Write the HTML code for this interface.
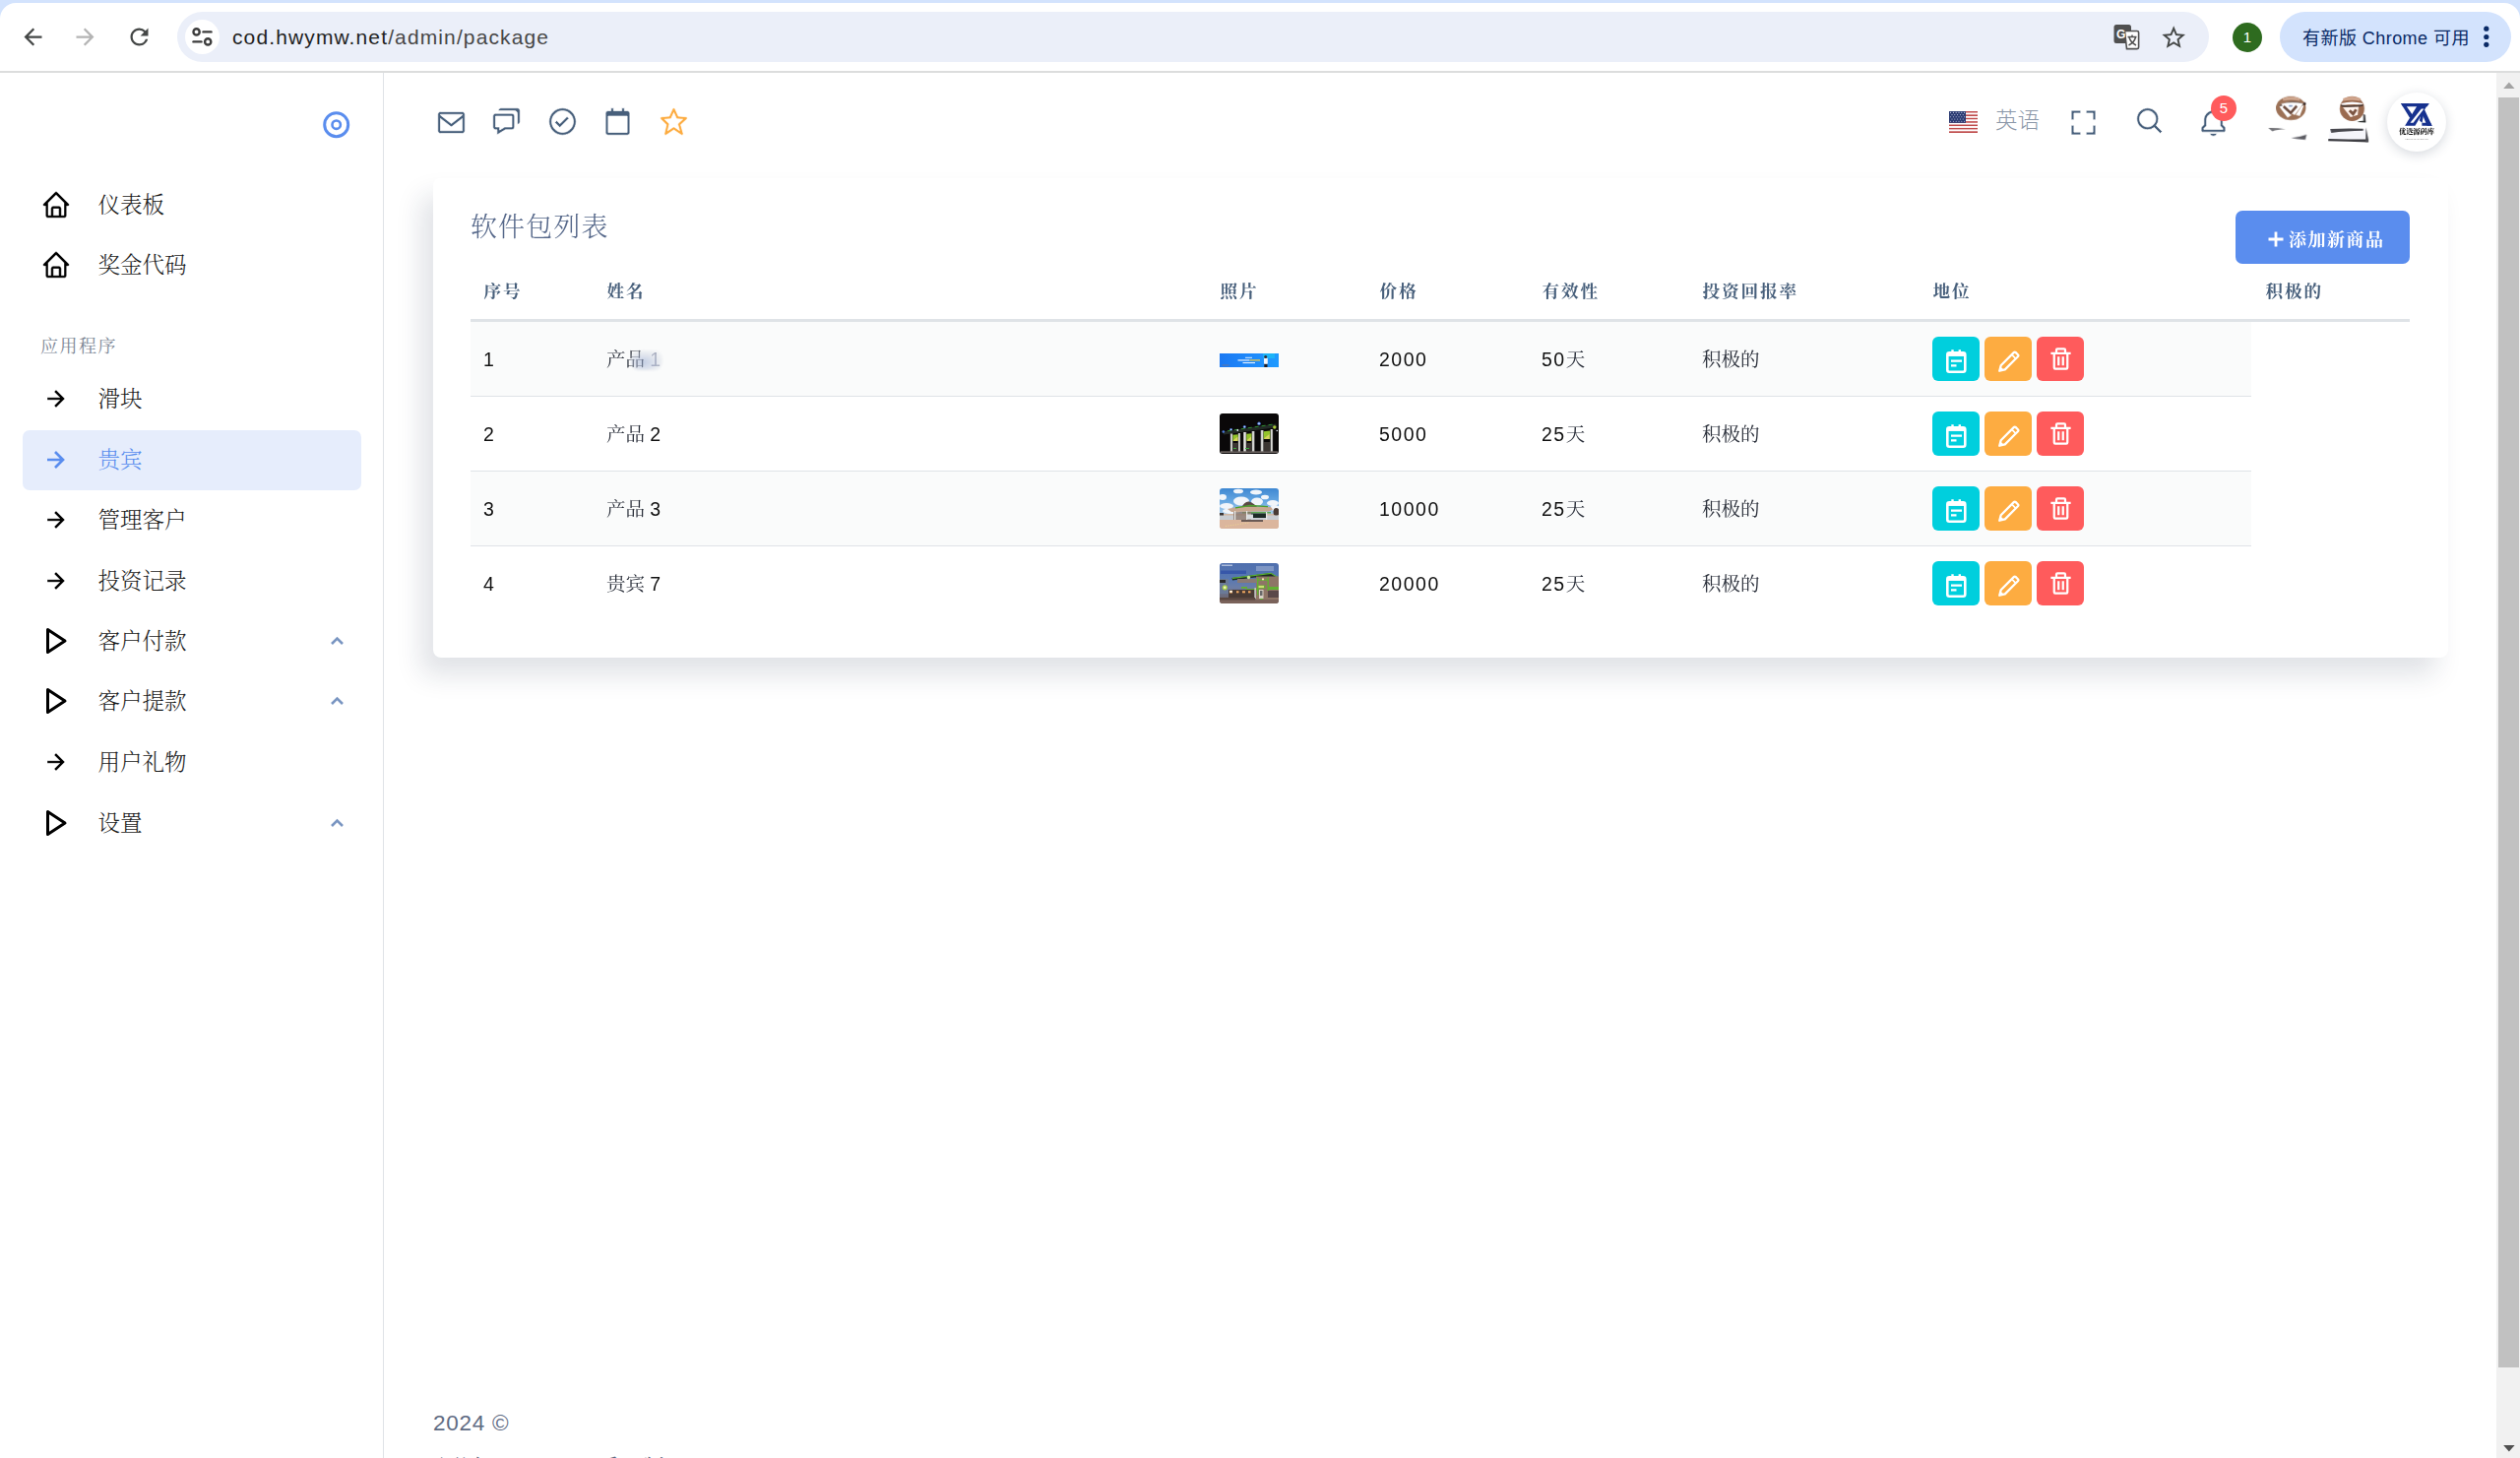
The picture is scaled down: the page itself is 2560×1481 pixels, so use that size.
<!DOCTYPE html>
<html lang="zh-CN">
<head>
<meta charset="utf-8">
<title>软件包列表</title>
<style>
*{box-sizing:border-box;margin:0;padding:0}
html,body{width:2560px;height:1481px;overflow:hidden;background:#fff}
body{position:relative;font-family:"Liberation Sans","Noto Serif CJK SC",serif;color:#111}
.abs{position:absolute}
svg{display:block;position:absolute;overflow:visible}
/* ---------- browser chrome ---------- */
#chrome{position:absolute;left:0;top:0;width:2560px;height:74px;background:#d3e3fd}
#toolbar{position:absolute;left:0;top:3px;width:2560px;height:70px;background:#fff;border-radius:16px 16px 0 0}
#chromeline{position:absolute;left:0;top:72px;width:2560px;height:2px;background:#dcdddd}
#omni{position:absolute;left:180px;top:12px;width:2064px;height:51px;border-radius:26px;background:#ebeff9}
#siteinfo{position:absolute;left:188px;top:20px;width:35px;height:35px;border-radius:50%;background:#fff}
#url{position:absolute;left:236px;top:24.7px;font:21px/26px "Liberation Sans",sans-serif;color:#1f1f1f;letter-spacing:1.12px;white-space:nowrap}
#url span{color:#474747}
#profile{position:absolute;left:2268px;top:23px;width:30px;height:30px;border-radius:50%;background:#2e6b1f;color:#fff;font:15px/30px "Liberation Sans",sans-serif;text-align:center}
#update{position:absolute;left:2316px;top:12px;width:235px;height:51px;border-radius:26px;background:#d3e3fd}
#updtxt{position:absolute;left:2339px;top:25px;font:18px/28px "Liberation Sans","Noto Sans CJK SC",sans-serif;color:#0a2a66;white-space:nowrap;letter-spacing:.45px}
/* ---------- scrollbar ---------- */
#sbtrack{position:absolute;left:2536px;top:74px;width:24px;height:1407px;background:#f1f1f1}
#sbthumb{position:absolute;left:2538px;top:99px;width:21px;height:1290px;background:#c1c1c1}
/* ---------- sidebar ---------- */
#sidebar{position:absolute;left:0;top:74px;width:390px;height:1407px;background:#fff;border-right:1.5px solid #dfe3e7}
.nav{position:absolute;left:99.5px;font-size:22.5px;line-height:30px;color:#1c1c1c;white-space:nowrap;font-family:"Liberation Sans","Noto Serif CJK SC",serif;font-weight:300;margin-top:1.2px}
.navhdr{position:absolute;left:41px;top:337px;font-size:18px;line-height:30px;letter-spacing:1.5px;color:#7d8796;white-space:nowrap}
#active{position:absolute;left:23px;top:437px;width:344px;height:61px;border-radius:7px;background:#e6edfc}
/* ---------- header ---------- */
#lang{position:absolute;left:2027px;top:107px;font:300 22.5px/32px "Liberation Sans","Noto Sans CJK SC",sans-serif;color:#8b97a8;white-space:nowrap}
#badge{position:absolute;left:2246px;top:97px;width:26px;height:26px;border-radius:13px;background:#ff5b5c;color:#fff;font:15px/26px "Liberation Sans",sans-serif;text-align:center}
#avatar{position:absolute;left:2425px;top:94px;width:60px;height:60px;border-radius:50%;background:#fff;box-shadow:0 3px 12px rgba(25,42,70,.18)}
/* ---------- card ---------- */
#card{position:absolute;left:440px;top:181px;width:2047px;height:487px;background:#fff;border-radius:8px;box-shadow:-12px 18px 27px 0 rgba(25,42,70,.13)}
#title{position:absolute;left:478px;top:212.6px;font-size:27px;line-height:36px;letter-spacing:1.1px;color:#56688a;white-space:nowrap;font-weight:300}
#addbtn{position:absolute;left:2271px;top:214px;width:177px;height:54px;border-radius:7px;background:#5a8dee}
#addtxt{position:absolute;left:2325px;top:230.3px;font-size:18px;line-height:28px;letter-spacing:1.5px;color:#fff;white-space:nowrap;font-weight:700}
.th{position:absolute;top:282.3px;font-size:17.6px;line-height:28px;letter-spacing:1.9px;color:#475f7b;font-weight:700;white-space:nowrap;margin-left:.5px}
#thline{position:absolute;left:478px;top:324px;width:1970px;height:3px;background:#dfe3e7}
.row{position:absolute;left:478px;width:1809px;height:76px;border-bottom:1.5px solid #dfe3e7}
.row.odd{background:#fafbfb}
.row.last{border-bottom:none}
.td{position:absolute;font-size:19.5px;line-height:28px;color:#111;white-space:nowrap;letter-spacing:1.5px}
.td{word-spacing:-1.6px}
.td i{font-style:normal;letter-spacing:0;color:#2a2f3a}
.td b.sm{font-weight:400;color:#8a90a8;filter:blur(.7px)}
.btn{position:absolute;width:48px;height:45px;border-radius:6px}
.b1{background:#00cfdd}.b2{background:#fdac41}.b3{background:#ff5b5c}
.thumb{position:absolute;left:1239px;width:60px;border-radius:3px;overflow:hidden}
#smudge{position:absolute;left:641px;top:356px;width:32px;height:20px;border-radius:8px;background:radial-gradient(ellipse at 40% 60%,rgba(150,170,210,.55),rgba(220,224,232,.5) 60%,rgba(250,251,251,0) 100%);filter:blur(1.2px)}
#footer{position:absolute;left:440px;top:1430.8px;font:22.5px/30px "Liberation Sans",sans-serif;color:#5f6b83;white-space:nowrap;letter-spacing:.75px}
#footer2{position:absolute;left:446px;top:1476.8px;font-size:22.5px;line-height:30px;color:#5f6b83;white-space:nowrap}
</style>
</head>
<body>
<!-- BROWSER CHROME -->
<div id="chrome"><div id="toolbar"></div></div>
<div id="chromeline"></div>
<div id="omni"></div>
<div id="siteinfo"></div>
<div id="url">cod.hwymw.net<span>/admin/package</span></div>
<div id="profile">1</div>
<div id="update"></div>
<div id="updtxt">有新版 Chrome 可用</div>
<svg style="left:19.5px;top:24px" width="27" height="27" viewBox="0 0 24 24" ><path d="M20 11H7.83l5.59-5.59L12 4l-8 8 8 8 1.41-1.41L7.83 13H20v-2z" fill="#444746"/></svg>
<svg style="left:73.2px;top:24px" width="27" height="27" viewBox="0 0 24 24" ><path d="M12 4l-1.41 1.41L16.17 11H4v2h12.17l-5.58 5.59L12 20l8-8z" fill="#b4b4b4"/></svg>
<svg style="left:127.5px;top:24px" width="27" height="27" viewBox="0 0 24 24" ><path d="M17.65 6.35A7.958 7.958 0 0 0 12 4c-4.42 0-7.99 3.58-7.99 8s3.57 8 7.99 8c3.73 0 6.84-2.55 7.73-6h-2.08A5.99 5.99 0 0 1 12 18c-3.31 0-6-2.69-6-6s2.69-6 6-6c1.66 0 3.14.69 4.22 1.78L13 11h7V4l-2.35 2.35z" fill="#444746"/></svg>
<svg style="left:195px;top:28px" width="21" height="19" viewBox="0 0 21 19"><g fill="none" stroke="#3c3c3c" stroke-width="2.4" stroke-linecap="round"><circle cx="4.6" cy="4.4" r="3.1"/><path d="M11.5 4.4H19.5"/><path d="M1.5 14.4H9.5"/><circle cx="16.2" cy="14.4" r="3.1"/></g></svg>
<svg style="left:2147px;top:25px" width="26" height="25" viewBox="0 0 26 25"><rect x="0.5" y="0" width="17.5" height="19" rx="2.5" fill="#505050"/><path d="M11.5 6.5H24a1.6 1.6 0 0 1 1.6 1.6V23a1.6 1.6 0 0 1-1.6 1.6H13.5z" fill="#fff" stroke="#505050" stroke-width="1.6"/><text x="3" y="13.8" font-family="Liberation Sans, sans-serif" font-size="12" font-weight="700" fill="#fff">G</text><path d="M14.5 12.5h9M19 10.5v2M16 13c1 3.5 4 6.5 7 8M22.5 13c-1 3.5-4 6.500-7 8" stroke="#505050" stroke-width="1.5" fill="none"/></svg>
<svg style="left:2193.6px;top:23.6px" width="28.4" height="28.4" viewBox="0 0 24 24" ><path d="M22 9.24l-7.19-.62L12 2 9.19 8.63 2 9.24l5.46 4.73L5.82 21 12 17.27 18.18 21l-1.63-7.03L22 9.24zM12 15.4l-3.76 2.27 1-4.28-3.32-2.88 4.38-.38L12 6.1l1.71 4.04 4.38.38-3.32 2.88 1 4.28L12 15.4z" fill="#444746"/></svg>
<svg style="left:2522px;top:25px" width="8" height="26" viewBox="0 0 8 26"><g fill="#0a2a66"><circle cx="3.8" cy="4.2" r="2.6"/><circle cx="3.8" cy="12.5" r="2.6"/><circle cx="3.8" cy="20.3" r="2.6"/></g></svg>

<!-- SCROLLBAR -->
<div id="sbtrack"></div>
<div id="sbthumb"></div>
<svg style="left:2542.600px;top:83px" width="12" height="8" viewBox="0 0 12 8"><path d="M5.900 0.500L11.600 7H0.200z" fill="#a3a3a3"/></svg>
<svg style="left:2542.600px;top:1467px" width="12" height="8" viewBox="0 0 12 8"><path d="M0.200 1H11.600L5.900 7.500z" fill="#505050"/></svg>

<!-- SIDEBAR -->
<div id="sidebar"></div>
<div id="active"></div>
<svg style="left:326px;top:111.400px" width="32" height="32" viewBox="0 0 32 32"><circle cx="15.700" cy="15.700" r="12" fill="none" stroke="#5a8dee" stroke-width="3"/><circle cx="15.700" cy="15.700" r="4.200" fill="none" stroke="#5a8dee" stroke-width="2.600"/></svg>
<div class="navhdr">应用程序</div>
<div class="nav" style="top:193px;color:#1c1c1c">仪表板</div>
<svg style="left:40.5px;top:191.5px" width="32" height="32" viewBox="0 0 24 24"><path d="M3 13h1v7c0 1.103.897 2 2 2h12c1.103 0 2-.897 2-2v-7h1a1 1 0 0 0 .707-1.707l-9-9a.999.999 0 0 0-1.414 0l-9 9A1 1 0 0 0 3 13zm7 7v-5h4v5h-4zm2-15.586 6 6V15l.001 5H16v-5c0-1.103-.897-2-2-2h-4c-1.103 0-2 .897-2 2v5H6v-9.586l6-6z" fill="#000" stroke="#fff" stroke-width=".3"/></svg>
<div class="nav" style="top:254px;color:#1c1c1c">奖金代码</div>
<svg style="left:40.5px;top:252.5px" width="32" height="32" viewBox="0 0 24 24"><path d="M3 13h1v7c0 1.103.897 2 2 2h12c1.103 0 2-.897 2-2v-7h1a1 1 0 0 0 .707-1.707l-9-9a.999.999 0 0 0-1.414 0l-9 9A1 1 0 0 0 3 13zm7 7v-5h4v5h-4zm2-15.586 6 6V15l.001 5H16v-5c0-1.103-.897-2-2-2h-4c-1.103 0-2 .897-2 2v5H6v-9.586l6-6z" fill="#000" stroke="#fff" stroke-width=".3"/></svg>
<div class="nav" style="top:390px;color:#1c1c1c">滑块</div>
<svg style="left:40px;top:389px" width="32" height="32" viewBox="0 0 24 24"><path d="m11.293 17.293 1.414 1.414L19.414 12l-6.707-6.707-1.414 1.414L15.586 11H6v2h9.586z" fill="#000" stroke="#fff" stroke-width=".3"/></svg>
<div class="nav" style="top:452px;color:#5a8dee">贵宾</div>
<svg style="left:40px;top:451px" width="32" height="32" viewBox="0 0 24 24"><path d="m11.293 17.293 1.414 1.414L19.414 12l-6.707-6.707-1.414 1.414L15.586 11H6v2h9.586z" fill="#5a8dee"/></svg>
<div class="nav" style="top:513px;color:#1c1c1c">管理客户</div>
<svg style="left:40px;top:512px" width="32" height="32" viewBox="0 0 24 24"><path d="m11.293 17.293 1.414 1.414L19.414 12l-6.707-6.707-1.414 1.414L15.586 11H6v2h9.586z" fill="#000" stroke="#fff" stroke-width=".3"/></svg>
<div class="nav" style="top:575px;color:#1c1c1c">投资记录</div>
<svg style="left:40px;top:574px" width="32" height="32" viewBox="0 0 24 24"><path d="m11.293 17.293 1.414 1.414L19.414 12l-6.707-6.707-1.414 1.414L15.586 11H6v2h9.586z" fill="#000" stroke="#fff" stroke-width=".3"/></svg>
<div class="nav" style="top:636px;color:#1c1c1c">客户付款</div>
<svg style="left:44px;top:635px" width="28" height="32" viewBox="0 0 28 32"><path d="M4.500 4.500V27.500L22 16z" fill="none" stroke="#000" stroke-width="3" stroke-linejoin="round"/></svg>
<svg style="left:334px;top:645px" width="18" height="12" viewBox="0 0 18 12"><path d="M3 9L8.500 3.500L14 9" fill="none" stroke="#7a96c2" stroke-width="2.6"/></svg>
<div class="nav" style="top:697px;color:#1c1c1c">客户提款</div>
<svg style="left:44px;top:696px" width="28" height="32" viewBox="0 0 28 32"><path d="M4.500 4.500V27.500L22 16z" fill="none" stroke="#000" stroke-width="3" stroke-linejoin="round"/></svg>
<svg style="left:334px;top:706px" width="18" height="12" viewBox="0 0 18 12"><path d="M3 9L8.500 3.500L14 9" fill="none" stroke="#7a96c2" stroke-width="2.6"/></svg>
<div class="nav" style="top:758.8px;color:#1c1c1c">用户礼物</div>
<svg style="left:40px;top:757.8px" width="32" height="32" viewBox="0 0 24 24"><path d="m11.293 17.293 1.414 1.414L19.414 12l-6.707-6.707-1.414 1.414L15.586 11H6v2h9.586z" fill="#000" stroke="#fff" stroke-width=".3"/></svg>
<div class="nav" style="top:820.8px;color:#1c1c1c">设置</div>
<svg style="left:44px;top:819.8px" width="28" height="32" viewBox="0 0 28 32"><path d="M4.500 4.500V27.500L22 16z" fill="none" stroke="#000" stroke-width="3" stroke-linejoin="round"/></svg>
<svg style="left:334px;top:829.8px" width="18" height="12" viewBox="0 0 18 12"><path d="M3 9L8.500 3.500L14 9" fill="none" stroke="#7a96c2" stroke-width="2.6"/></svg>

<!-- HEADER -->
<svg style="left:442.2px;top:107.89999999999999px" width="33" height="33" viewBox="0 0 24 24" fill="#475f7b" stroke="#fff" stroke-width=".5"><path d="M20 4H4c-1.103 0-2 .897-2 2v12c0 1.103.897 2 2 2h16c1.103 0 2-.897 2-2V6c0-1.103-.897-2-2-2zm0 2v.511l-8 6.223-8-6.222V6h16zM4 18V9.044l7.386 5.745a.994.994 0 0 0 1.228 0L20 9.044 20.002 18H4z"/></svg>
<svg style="left:498.2px;top:107.3px" width="33" height="33" viewBox="0 0 24 24" fill="#475f7b" stroke="#fff" stroke-width=".5"><path d="M5 18v3.766l1.515-.909L11.277 18H16c1.103 0 2-.897 2-2V8c0-1.103-.897-2-2-2H4c-1.103 0-2 .897-2 2v8c0 1.103.897 2 2 2h1zM4 8h12v8h-5.277L7 18.234V16H4V8z"/><path d="M20 2H8c-1.103 0-2 .897-2 2h12c1.103 0 2 .897 2 2v8c1.103 0 2-.897 2-2V4c0-1.103-.897-2-2-2z"/></svg>
<svg style="left:555.2px;top:107.3px" width="33" height="33" viewBox="0 0 24 24" fill="#475f7b" stroke="#fff" stroke-width=".5"><path d="M12 2C6.486 2 2 6.486 2 12s4.486 10 10 10 10-4.486 10-10S17.514 2 12 2zm0 18c-4.411 0-8-3.589-8-8s3.589-8 8-8 8 3.589 8 8-3.589 8-8 8z"/><path d="M9.999 13.587 7.700 11.292l-1.412 1.416 3.713 3.705 6.706-6.706-1.414-1.414z"/></svg>
<svg style="left:611.4px;top:107.3px" width="33" height="33" viewBox="0 0 24 24" fill="#475f7b" stroke="#fff" stroke-width=".5"><path d="M3 6v14c0 1.103.897 2 2 2h14c1.103 0 2-.897 2-2V6c0-1.103-.897-2-2-2h-2V2h-2v2H9V2H7v2H5c-1.103 0-2 .897-2 2zm16 14H5V8h14z"/></svg>
<svg style="left:668px;top:107.3px" width="33" height="33" viewBox="0 0 24 24" fill="#fdac41" stroke="#fff" stroke-width=".5"><path d="m6.516 14.323-1.490 6.452a.998.998 0 0 0 1.529 1.057L12 18.202l5.445 3.630a1.001 1.001 0 0 0 1.517-1.106l-1.829-6.400 4.536-4.082a1 1 0 0 0-.590-1.740l-5.701-.454-2.467-5.461a.998.998 0 0 0-1.822 0L8.622 8.050l-5.701.453a1 1 0 0 0-.619 1.713l4.214 4.107zm2.853-4.326a.998.998 0 0 0 .832-.586L12 5.430l1.799 3.981a.998.998 0 0 0 .832.586l3.972.315-3.271 2.944c-.284.256-.397.650-.293 1.018l1.253 4.385-3.736-2.491a.995.995 0 0 0-1.109 0l-3.904 2.603 1.050-4.546a1 1 0 0 0-.276-.940l-3.038-2.962 4.090-.326z"/></svg>
<svg style="left:2100.4px;top:107.5px" width="33" height="33" viewBox="0 0 24 24" fill="#475f7b" stroke="#fff" stroke-width=".5"><path d="M5 5h5V3H3v7h2zm5 14H5v-5H3v7h7zm11-5h-2v5h-5v2h7zm-2-4h2V3h-7v2h5z"/></svg>
<svg style="left:2168px;top:107.3px" width="33" height="33" viewBox="0 0 24 24" fill="#475f7b" stroke="#fff" stroke-width=".5"><path d="M10 18a7.952 7.952 0 0 0 4.897-1.688l4.396 4.396 1.414-1.414-4.396-4.396A7.952 7.952 0 0 0 18 10c0-4.411-3.589-8-8-8s-8 3.589-8 8 3.589 8 8 8zm0-14c3.309 0 6 2.691 6 6s-2.691 6-6 6-6-2.691-6-6 2.691-6 6-6z"/></svg>
<svg style="left:2231.9px;top:107.69999999999999px" width="33" height="33" viewBox="0 0 24 24" fill="#475f7b" stroke="#fff" stroke-width=".5"><path d="M19 13.586V10c0-3.217-2.185-5.927-5.145-6.742C13.562 2.520 12.846 2 12 2s-1.562.520-1.855 1.258C7.185 4.074 5 6.783 5 10v3.586l-1.707 1.707A.996.996 0 0 0 3 16v2a1 1 0 0 0 1 1h16a1 1 0 0 0 1-1v-2a.996.996 0 0 0-.293-.707L19 13.586zM19 17H5v-.586l1.707-1.707A.996.996 0 0 0 7 14v-4c0-2.757 2.243-5 5-5s5 2.243 5 5v4c0 .266.105.520.293.707L19 16.414V17zm-7 5a2.980 2.980 0 0 0 2.818-2H9.182A2.980 2.980 0 0 0 12 22z"/></svg>
<svg style="left:1980px;top:113px" width="29" height="22" viewBox="0 0 29 22"><rect x="0" y="0.00" width="29" height="1.69" fill="#bf4b4b"/><rect x="0" y="1.69" width="29" height="1.69" fill="#fff"/><rect x="0" y="3.38" width="29" height="1.69" fill="#bf4b4b"/><rect x="0" y="5.08" width="29" height="1.69" fill="#fff"/><rect x="0" y="6.77" width="29" height="1.69" fill="#bf4b4b"/><rect x="0" y="8.46" width="29" height="1.69" fill="#fff"/><rect x="0" y="10.15" width="29" height="1.69" fill="#bf4b4b"/><rect x="0" y="11.85" width="29" height="1.69" fill="#fff"/><rect x="0" y="13.54" width="29" height="1.69" fill="#bf4b4b"/><rect x="0" y="15.23" width="29" height="1.69" fill="#fff"/><rect x="0" y="16.92" width="29" height="1.69" fill="#bf4b4b"/><rect x="0" y="18.62" width="29" height="1.69" fill="#fff"/><rect x="0" y="20.31" width="29" height="1.69" fill="#bf4b4b"/><rect x="0" y="0" width="17" height="11.850" fill="#2a3a72"/><g fill="#c8cfe6"><circle cx="1.6" cy="1.4" r=".55"/><circle cx="4.4" cy="1.4" r=".55"/><circle cx="7.2" cy="1.4" r=".55"/><circle cx="10.0" cy="1.4" r=".55"/><circle cx="12.8" cy="1.4" r=".55"/><circle cx="15.6" cy="1.4" r=".55"/><circle cx="3.0" cy="3.6" r=".55"/><circle cx="5.8" cy="3.6" r=".55"/><circle cx="8.6" cy="3.6" r=".55"/><circle cx="11.4" cy="3.6" r=".55"/><circle cx="14.2" cy="3.6" r=".55"/><circle cx="1.6" cy="5.8" r=".55"/><circle cx="4.4" cy="5.8" r=".55"/><circle cx="7.2" cy="5.8" r=".55"/><circle cx="10.0" cy="5.8" r=".55"/><circle cx="12.8" cy="5.8" r=".55"/><circle cx="15.6" cy="5.8" r=".55"/><circle cx="3.0" cy="8.0" r=".55"/><circle cx="5.8" cy="8.0" r=".55"/><circle cx="8.6" cy="8.0" r=".55"/><circle cx="11.4" cy="8.0" r=".55"/><circle cx="14.2" cy="8.0" r=".55"/><circle cx="1.6" cy="10.2" r=".55"/><circle cx="4.4" cy="10.2" r=".55"/><circle cx="7.2" cy="10.2" r=".55"/><circle cx="10.0" cy="10.2" r=".55"/><circle cx="12.8" cy="10.2" r=".55"/><circle cx="15.6" cy="10.2" r=".55"/></g></svg>
<div id="lang">英语</div>
<div id="badge">5</div>
<svg style="left:2295px;top:90px" width="130" height="65" viewBox="0 0 2520 1260">
<defs><filter id="bl" x="-10%" y="-10%" width="120%" height="120%"><feGaussianBlur stdDeviation="11"/></filter></defs>
<g filter="url(#bl)">
<ellipse cx="625" cy="385" rx="295" ry="235" fill="#9c7156"/>
<path d="M400 330Q640 190 880 300L850 350Q640 270 420 380z" fill="#5a4a44"/>
<path d="M470 215Q640 150 800 215Q640 185 470 215z" stroke="#d0a890" stroke-width="45" fill="#d0a890"/>
<path d="M430 300Q640 250 870 295L700 520L600 470z" fill="#fff"/>
<path d="M395 355L470 330L640 520L560 570z" fill="#fff"/>
<path d="M720 520L840 340L880 330L800 540z" fill="#fff"/>
<path d="M480 350L620 480L740 340" stroke="#6a4a3c" stroke-width="50" fill="none"/>
<ellipse cx="620" cy="340" rx="45" ry="12" fill="#4a6aa8"/>
<circle cx="895" cy="300" r="28" fill="#3a2a28"/>
<path d="M180 775Q350 770 520 800Q350 805 260 840z" fill="#5a5a60" opacity=".85"/>
<path d="M630 975Q800 955 935 905L910 1005Q760 1000 630 975z" fill="#4a4a52" opacity=".9"/>
<ellipse cx="1830" cy="395" rx="242" ry="245" fill="#9a6a50"/>
<path d="M1660 215Q1830 140 1990 215Q1830 190 1660 215z" stroke="#cfa48c" stroke-width="50" fill="#cfa48c"/>
<path d="M1620 290Q1830 230 2040 290L2030 320Q1830 300 1630 330z" fill="#fbfbfd"/>
<path d="M1610 320Q1830 350 2050 310L2045 345Q1830 385 1615 355z" fill="#4a3a34"/>
<path d="M1650 370L1960 360L1940 520L1800 560z" fill="#fff4ee"/>
<path d="M1780 430L1850 500L1910 410" stroke="#7a5240" stroke-width="55" fill="none"/>
<path d="M2050 500L2090 520L2100 640L2050 640z" fill="#4a4a4c"/>
<path d="M1930 660Q2000 620 2100 640L2100 670z" fill="#2e3230"/>
<path d="M1400 790H2100V1040H1365z" fill="#f6f6fb"/>
<path d="M1400 795Q1700 780 2050 790L2050 830Q1700 840 1420 870z" fill="#4a4a50"/>
<path d="M1365 990Q1750 1000 2150 1000L2150 1055Q1750 1040 1360 1030z" fill="#3e3e42"/>
<path d="M2105 760L2150 990L2150 1050L2095 1050z" fill="#4e4e54"/>
</g></svg>
<div id="avatar"></div>
<svg style="left:2425px;top:94px" width="60" height="60" viewBox="0 0 1458 1458">
<g fill="#17328f">
<path d="M340 268H1040L990 345H390z"/>
<path d="M340 268H430L640 570L560 625z"/>
<path d="M760 300H1000L690 820H440z"/>
<path d="M830 440L905 385L1110 820H985z"/>
<path d="M860 750H1070L1110 820H860z"/>
<path d="M850 470L905 520L865 750L800 690z"/>
</g>
<path d="M845 400H910L645 750H570z" fill="#fff"/>
<text x="729" y="1020" text-anchor="middle" font-family="Liberation Serif, Noto Serif CJK SC, serif" font-weight="900" font-size="180" fill="#222" letter-spacing="-4">优选源码库</text>
<text x="729" y="1155" text-anchor="middle" font-family="Liberation Sans, sans-serif" font-size="52" fill="#777" letter-spacing="2">YOUXUANYUANMAKU</text>
</svg>

<!-- CARD -->
<div id="card"></div>
<div id="title">软件包列表</div>
<div id="addbtn"></div>
<svg style="left:2301.500px;top:233.300px" width="20" height="20" viewBox="0 0 20 20"><path d="M10 2.500V17.500M2.500 10H17.500" stroke="#fff" stroke-width="2.800" fill="none"/></svg>
<div id="addtxt">添加新商品</div>
<div class="th" style="left:491px">序号</div>
<div class="th" style="left:616px">姓名</div>
<div class="th" style="left:1239px">照片</div>
<div class="th" style="left:1401px">价格</div>
<div class="th" style="left:1566px">有效性</div>
<div class="th" style="left:1729px">投资回报率</div>
<div class="th" style="left:1963px">地位</div>
<div class="th" style="left:2301px">积极的</div>
<div id="thline"></div>
<div class="row odd" style="top:326.5px"></div>
<div class="td" style="left:491px;top:350.5px">1</div>
<div class="td" style="left:616px;top:350.5px"><i>产品</i> <b class="sm">1</b></div>
<div class="td" style="left:1401px;top:350.5px">2000</div>
<div class="td" style="left:1566px;top:350.5px">50<i>天</i></div>
<div class="td" style="left:1729px;top:350.5px"><i>积极的</i></div>
<div class="btn b1" style="left:1963px;top:342.0px"></div>
<div class="btn b2" style="left:2016px;top:342.0px"></div>
<div class="btn b3" style="left:2069px;top:342.0px"></div>
<svg style="left:1976px;top:354.09999999999997px" width="24" height="27" viewBox="0 0 24 27"><g fill="none" stroke="#fff"><rect x="2.300" y="4.300" width="18" height="19.500" rx="2" stroke-width="2.600"/><path d="M2.300 6.300H20.300" stroke-width="3.300"/><path d="M7.500 1.300V4.500M14.800 1.300V4.500" stroke-width="2.400"/><path d="M6 12.600H17M6 17.300H11.500" stroke-width="2.300"/></g></svg>
<svg style="left:2026.700px;top:353.7px" width="27" height="27" viewBox="0 0 27 27"><g transform="translate(13.500 13.500) scale(.9) translate(-13.500 -13.500)"><g fill="none" stroke="#fff" stroke-width="2.500" stroke-linejoin="round"><path d="M3.200 23.800L4.800 17.600L19.600 2.800a1.200 1.200 0 0 1 1.700 0L24.200 5.700a1.200 1.200 0 0 1 0 1.700L9.400 22.200z"/><path d="M17.200 5.600L21.400 9.800" stroke-width="1.900"/></g><path d="M3.200 23.800L4.500 19L8 22.500z" fill="#fff"/></g></svg>
<svg style="left:2079.500px;top:351.0px" width="27" height="27" viewBox="0 0 24 24" fill="#fff"><path d="M5 20a2 2 0 0 0 2 2h10a2 2 0 0 0 2-2V8h2V6h-4V4a2 2 0 0 0-2-2H9a2 2 0 0 0-2 2v2H3v2h2zM9 4h6v2H9zM8 8h9v12H7V8z"/><path d="M9 10h2v8H9zm4 0h2v8h-2z"/></svg>
<div class="thumb" style="top:359px;height:14px;border-radius:0px"><svg width="60" height="14" viewBox="0 0 60 14" style="position:static"><defs><linearGradient id="g1" x1="0" x2="1"><stop offset="0" stop-color="#1a78f2"/><stop offset=".6" stop-color="#1f8cfb"/><stop offset="1" stop-color="#1e9bff"/></linearGradient><filter id="b1"><feGaussianBlur stdDeviation=".35"/></filter></defs><rect width="60" height="14" fill="url(#g1)"/><g filter="url(#b1)"><rect x="44" y="0" width="12" height="5" fill="#19c0f5" opacity=".7"/><rect x="26" y="3.800" width="7" height="1" fill="#d8ecff"/><rect x="18.500" y="6" width="12" height="1.800" fill="#a8cdf8"/><rect x="30.500" y="6" width="10.500" height="1.800" fill="#b8b878"/><rect x="23.500" y="9" width="12.500" height="1.100" fill="#e6f2ff"/><rect x="2.500" y="11" width="7" height="2" fill="#3f78c8"/><rect x="45" y="4.500" width="3.800" height="6.500" rx="1" fill="#f4f6fa"/><circle cx="46.700" cy="3.600" r="1.500" fill="#2a2a38"/><rect x="45.300" y="10.800" width="3.200" height="3.200" fill="#1a1a28"/></g></svg></div>
<div class="row" style="top:402.5px"></div>
<div class="td" style="left:491px;top:426.5px">2</div>
<div class="td" style="left:616px;top:426.5px"><i>产品</i> 2</div>
<div class="td" style="left:1401px;top:426.5px">5000</div>
<div class="td" style="left:1566px;top:426.5px">25<i>天</i></div>
<div class="td" style="left:1729px;top:426.5px"><i>积极的</i></div>
<div class="btn b1" style="left:1963px;top:418.0px"></div>
<div class="btn b2" style="left:2016px;top:418.0px"></div>
<div class="btn b3" style="left:2069px;top:418.0px"></div>
<svg style="left:1976px;top:430.09999999999997px" width="24" height="27" viewBox="0 0 24 27"><g fill="none" stroke="#fff"><rect x="2.300" y="4.300" width="18" height="19.500" rx="2" stroke-width="2.600"/><path d="M2.300 6.300H20.300" stroke-width="3.300"/><path d="M7.500 1.300V4.500M14.800 1.300V4.500" stroke-width="2.400"/><path d="M6 12.600H17M6 17.300H11.500" stroke-width="2.300"/></g></svg>
<svg style="left:2026.700px;top:429.7px" width="27" height="27" viewBox="0 0 27 27"><g transform="translate(13.500 13.500) scale(.9) translate(-13.500 -13.500)"><g fill="none" stroke="#fff" stroke-width="2.500" stroke-linejoin="round"><path d="M3.200 23.800L4.800 17.600L19.600 2.800a1.200 1.200 0 0 1 1.700 0L24.200 5.700a1.200 1.200 0 0 1 0 1.700L9.400 22.200z"/><path d="M17.200 5.600L21.400 9.800" stroke-width="1.900"/></g><path d="M3.200 23.800L4.500 19L8 22.500z" fill="#fff"/></g></svg>
<svg style="left:2079.500px;top:427.0px" width="27" height="27" viewBox="0 0 24 24" fill="#fff"><path d="M5 20a2 2 0 0 0 2 2h10a2 2 0 0 0 2-2V8h2V6h-4V4a2 2 0 0 0-2-2H9a2 2 0 0 0-2 2v2H3v2h2zM9 4h6v2H9zM8 8h9v12H7V8z"/><path d="M9 10h2v8H9zm4 0h2v8h-2z"/></svg>
<div class="thumb" style="top:420px;height:41px;border-radius:3px"><svg width="60" height="41" viewBox="0 0 60 41" style="position:static"><defs><filter id="b2"><feGaussianBlur stdDeviation=".45"/></filter><linearGradient id="p2" x1="0" x2="1"><stop offset="0" stop-color="#8a8a88"/><stop offset=".5" stop-color="#f4f4f2"/><stop offset="1" stop-color="#7a7a78"/></linearGradient></defs><rect width="60" height="41" fill="#0a0809"/><g filter="url(#b2)"><path d="M3 18.500L57 10.500L58 14L4 21.500z" fill="#232a26"/><path d="M8 17.800L56 10.800" stroke="#2f8a2f" stroke-width="1" stroke-dasharray="4 3"/><g fill="url(#p2)"><rect x="10.800" y="20.500" width="2.600" height="19"/><rect x="18.800" y="20" width="2.300" height="19.500"/><rect x="24" y="19" width="3.300" height="20.500"/><rect x="32.600" y="18" width="3" height="21.500"/><rect x="41.600" y="17" width="3.100" height="22.500"/><rect x="51.500" y="16" width="2.600" height="23.500"/></g><g fill="#93c32c"><path d="M13.400 21.800l5.300-.6v6.800h-5.300z"/><path d="M27.300 20.800l5.200-.6v7.600h-5.200z"/><path d="M44.700 18.200l6.600-.8v8.600h-6.600z"/></g><g fill="#e8d86a" opacity=".8"><path d="M14 27l4.500-3.500V28H14z"/><path d="M28 27l4-3.500V28h-4z"/><path d="M45.500 25l5-4V26h-5z"/></g><g fill="#4a78d8"><circle cx="3.800" cy="18.500" r="1.300"/><circle cx="11.600" cy="16.300" r="1.300"/><circle cx="25.300" cy="13.600" r="1.500"/><circle cx="40" cy="10.300" r="1.700"/></g><g fill="#eaf2ff"><circle cx="11.600" cy="16.300" r=".6"/><circle cx="25.300" cy="13.600" r=".7"/><circle cx="40" cy="10.300" r=".8"/><circle cx="18.300" cy="17" r=".9"/><circle cx="58.300" cy="17.500" r=".8"/></g><circle cx="55.800" cy="14" r="1.700" fill="#a8c838"/><g fill="#3a3432"><rect x="14" y="30" width="4.500" height="8"/><rect x="27.500" y="30" width="5" height="8"/><rect x="45" y="29" width="6" height="9"/></g><g fill="#3aa83a"><rect x="14" y="35" width="3" height="1"/><rect x="26" y="35" width="4" height="1"/></g><rect x="1" y="38.300" width="58" height="1.700" fill="#6a625e"/></g></svg></div>
<div class="row odd" style="top:478.5px"></div>
<div class="td" style="left:491px;top:502.5px">3</div>
<div class="td" style="left:616px;top:502.5px"><i>产品</i> 3</div>
<div class="td" style="left:1401px;top:502.5px">10000</div>
<div class="td" style="left:1566px;top:502.5px">25<i>天</i></div>
<div class="td" style="left:1729px;top:502.5px"><i>积极的</i></div>
<div class="btn b1" style="left:1963px;top:494.0px"></div>
<div class="btn b2" style="left:2016px;top:494.0px"></div>
<div class="btn b3" style="left:2069px;top:494.0px"></div>
<svg style="left:1976px;top:506.1px" width="24" height="27" viewBox="0 0 24 27"><g fill="none" stroke="#fff"><rect x="2.300" y="4.300" width="18" height="19.500" rx="2" stroke-width="2.600"/><path d="M2.300 6.300H20.300" stroke-width="3.300"/><path d="M7.500 1.300V4.500M14.800 1.300V4.500" stroke-width="2.400"/><path d="M6 12.600H17M6 17.300H11.500" stroke-width="2.300"/></g></svg>
<svg style="left:2026.700px;top:505.70000000000005px" width="27" height="27" viewBox="0 0 27 27"><g transform="translate(13.500 13.500) scale(.9) translate(-13.500 -13.500)"><g fill="none" stroke="#fff" stroke-width="2.500" stroke-linejoin="round"><path d="M3.200 23.800L4.800 17.600L19.600 2.800a1.200 1.200 0 0 1 1.700 0L24.200 5.700a1.200 1.200 0 0 1 0 1.700L9.400 22.200z"/><path d="M17.200 5.600L21.400 9.800" stroke-width="1.900"/></g><path d="M3.200 23.800L4.500 19L8 22.500z" fill="#fff"/></g></svg>
<svg style="left:2079.500px;top:503.00000000000006px" width="27" height="27" viewBox="0 0 24 24" fill="#fff"><path d="M5 20a2 2 0 0 0 2 2h10a2 2 0 0 0 2-2V8h2V6h-4V4a2 2 0 0 0-2-2H9a2 2 0 0 0-2 2v2H3v2h2zM9 4h6v2H9zM8 8h9v12H7V8z"/><path d="M9 10h2v8H9zm4 0h2v8h-2z"/></svg>
<div class="thumb" style="top:496px;height:41px;border-radius:3px"><svg width="60" height="41" viewBox="0 0 60 41" style="position:static"><defs><linearGradient id="g3" x1="0" y1="0" x2="0" y2="1"><stop offset="0" stop-color="#3f88d2"/><stop offset=".3" stop-color="#62a4e0"/><stop offset=".62" stop-color="#a8cdec"/><stop offset=".63" stop-color="#d0b8a4"/><stop offset="1" stop-color="#dcb79e"/></linearGradient><filter id="b3"><feGaussianBlur stdDeviation=".55"/></filter></defs><rect width="60" height="41" fill="url(#g3)"/><g filter="url(#b3)"><g fill="#f1f5fa"><ellipse cx="19" cy="3" rx="5" ry="2.300"/><ellipse cx="37" cy="4" rx="6" ry="2.500"/><ellipse cx="3" cy="9" rx="4" ry="3"/><ellipse cx="22" cy="13" rx="8" ry="4.500"/><ellipse cx="38" cy="13.500" rx="6" ry="4"/><ellipse cx="46" cy="9" rx="4" ry="2.300"/><ellipse cx="54" cy="15" rx="6" ry="3"/><ellipse cx="7" cy="18" rx="7" ry="3"/><ellipse cx="56" cy="20" rx="5" ry="3"/><ellipse cx="12" cy="23" rx="9" ry="3"/></g><path d="M22 20Q25 13 30 13.500Q35 15 39 20z" fill="#5a4a44"/><ellipse cx="57.500" cy="24" rx="3" ry="4" fill="#4a3a34"/><rect x="0" y="25" width="4" height="5" fill="#3a3634"/><rect x="0" y="27.500" width="60" height="5" fill="#c9cdd2"/><path d="M8 21L20 18.500L52 19L54 21.500L50 23.500L12 24z" fill="#c8a890"/><path d="M16 19.800L31 17.500L49 18.600" stroke="#4ea02e" stroke-width="1.300" fill="none"/><path d="M23 24.800H52" stroke="#4ea02e" stroke-width="1.200"/><rect x="32" y="25.500" width="16" height="4.500" fill="#1f2a26"/><rect x="14" y="24" width="18" height="8" fill="#8a7468" opacity=".75"/><g fill="#e8e8e4"><rect x="15" y="23" width="1.200" height="9"/><rect x="27" y="23" width="1.200" height="9"/><rect x="47" y="24" width="1.200" height="9"/></g><rect x="28" y="26.500" width="6" height="5" fill="#d8dcdf"/><rect x="0" y="32" width="60" height="9" fill="#dbb69d"/><rect x="22" y="32" width="22" height="2" fill="#6a5a54"/><path d="M6 38.500L30 35" stroke="#f0d890" stroke-width=".9" stroke-dasharray="1 1.500"/></g></svg></div>
<div class="row last" style="top:554.5px"></div>
<div class="td" style="left:491px;top:578.5px">4</div>
<div class="td" style="left:616px;top:578.5px"><i>贵宾</i> 7</div>
<div class="td" style="left:1401px;top:578.5px">20000</div>
<div class="td" style="left:1566px;top:578.5px">25<i>天</i></div>
<div class="td" style="left:1729px;top:578.5px"><i>积极的</i></div>
<div class="btn b1" style="left:1963px;top:570.0px"></div>
<div class="btn b2" style="left:2016px;top:570.0px"></div>
<div class="btn b3" style="left:2069px;top:570.0px"></div>
<svg style="left:1976px;top:582.1px" width="24" height="27" viewBox="0 0 24 27"><g fill="none" stroke="#fff"><rect x="2.300" y="4.300" width="18" height="19.500" rx="2" stroke-width="2.600"/><path d="M2.300 6.300H20.300" stroke-width="3.300"/><path d="M7.500 1.300V4.500M14.800 1.300V4.500" stroke-width="2.400"/><path d="M6 12.600H17M6 17.300H11.500" stroke-width="2.300"/></g></svg>
<svg style="left:2026.700px;top:581.7px" width="27" height="27" viewBox="0 0 27 27"><g transform="translate(13.500 13.500) scale(.9) translate(-13.500 -13.500)"><g fill="none" stroke="#fff" stroke-width="2.500" stroke-linejoin="round"><path d="M3.200 23.800L4.800 17.600L19.600 2.800a1.200 1.200 0 0 1 1.700 0L24.200 5.700a1.200 1.200 0 0 1 0 1.700L9.400 22.200z"/><path d="M17.200 5.600L21.400 9.800" stroke-width="1.900"/></g><path d="M3.200 23.800L4.500 19L8 22.500z" fill="#fff"/></g></svg>
<svg style="left:2079.500px;top:579.0px" width="27" height="27" viewBox="0 0 24 24" fill="#fff"><path d="M5 20a2 2 0 0 0 2 2h10a2 2 0 0 0 2-2V8h2V6h-4V4a2 2 0 0 0-2-2H9a2 2 0 0 0-2 2v2H3v2h2zM9 4h6v2H9zM8 8h9v12H7V8z"/><path d="M9 10h2v8H9zm4 0h2v8h-2z"/></svg>
<div class="thumb" style="top:572px;height:41px;border-radius:3px"><svg width="60" height="41" viewBox="0 0 60 41" style="position:static"><defs><linearGradient id="g4" x1="0" y1="0" x2="0" y2="1"><stop offset="0" stop-color="#4f6fae"/><stop offset=".4" stop-color="#5878b2"/><stop offset=".6" stop-color="#6c7ea6"/><stop offset="1" stop-color="#6a5a58"/></linearGradient><filter id="b4"><feGaussianBlur stdDeviation=".5"/></filter></defs><rect width="60" height="41" fill="url(#g4)"/><g filter="url(#b4)"><rect x="1" y="7.500" width="26" height="3.500" fill="#2f50a8" opacity=".8"/><g fill="#c8d4ea" opacity=".75"><rect x="2" y="1.500" width="11" height="1.500"/><rect x="37" y="3" width="18" height="5" opacity=".5"/></g><path d="M12.500 15L52 10L60 15V18L36 14.500L13 17.500z" fill="#1e2a22"/><path d="M13 15.300L52 10.300L59 14.500" stroke="#58b030" stroke-width="1.200" fill="none"/><path d="M37 13.500H60V37H37z" fill="#8e7466"/><path d="M18 16H38V20H18z" fill="#8a7a74"/><rect x="0" y="16" width="9" height="15" fill="#6a7a98"/><rect x="0" y="17" width="6" height="3" fill="#2a2a2a"/><circle cx="5.300" cy="24.800" r="2.600" fill="#a8d048"/><circle cx="5.300" cy="24.800" r="1.200" fill="#f4f8c8"/><circle cx="29.500" cy="14.500" r="1.700" fill="#cfe8a0"/><g fill="#62b030"><rect x="38" y="14.500" width="1.400" height="18"/><rect x="48.500" y="14" width="1.400" height="14"/><rect x="38" y="16.500" width="11" height="1.300"/><rect x="38.500" y="22.500" width="8" height="3.200"/><rect x="22" y="24" width="6" height="1.800"/><rect x="27" y="26" width="13" height="1.300"/><rect x="31" y="33" width="3.500" height="4.500"/><rect x="50" y="24" width="10" height="3"/><rect x="41" y="36" width="3" height="2"/></g><rect x="39.500" y="22.900" width="5.500" height="2.200" fill="#c8e070"/><rect x="9" y="27" width="26" height="8" fill="#4a3a34"/><g fill="#f0a860"><rect x="10" y="28" width="3" height="2.500"/><rect x="17" y="28.300" width="2.500" height="2"/><rect x="23" y="28.300" width="3" height="2"/><rect x="29" y="28.300" width="2.500" height="2"/></g><rect x="10" y="27.800" width="3" height="2" fill="#fff0d8"/><circle cx="44" cy="16.300" r="1.100" fill="#ffe8c0"/><g fill="#d8d0c4"><rect x="40" y="27" width="4.500" height="9"/><rect x="35.500" y="25" width="1.300" height="11"/></g><rect x="41" y="28" width="2.500" height="5" fill="#6a6a6a"/><rect x="49" y="28" width="11" height="7" fill="#5a4a48"/><rect x="0" y="37" width="60" height="4" fill="#7a625a"/><rect x="0" y="35" width="36" height="2.500" fill="#5a4640"/></g></svg></div>

<div id="smudge"></div>
<div id="footer">2024 ©</div>
<div id="footer2">通过<span style="position:absolute;left:161px;top:0">手工制</span></div>
</body>
</html>
